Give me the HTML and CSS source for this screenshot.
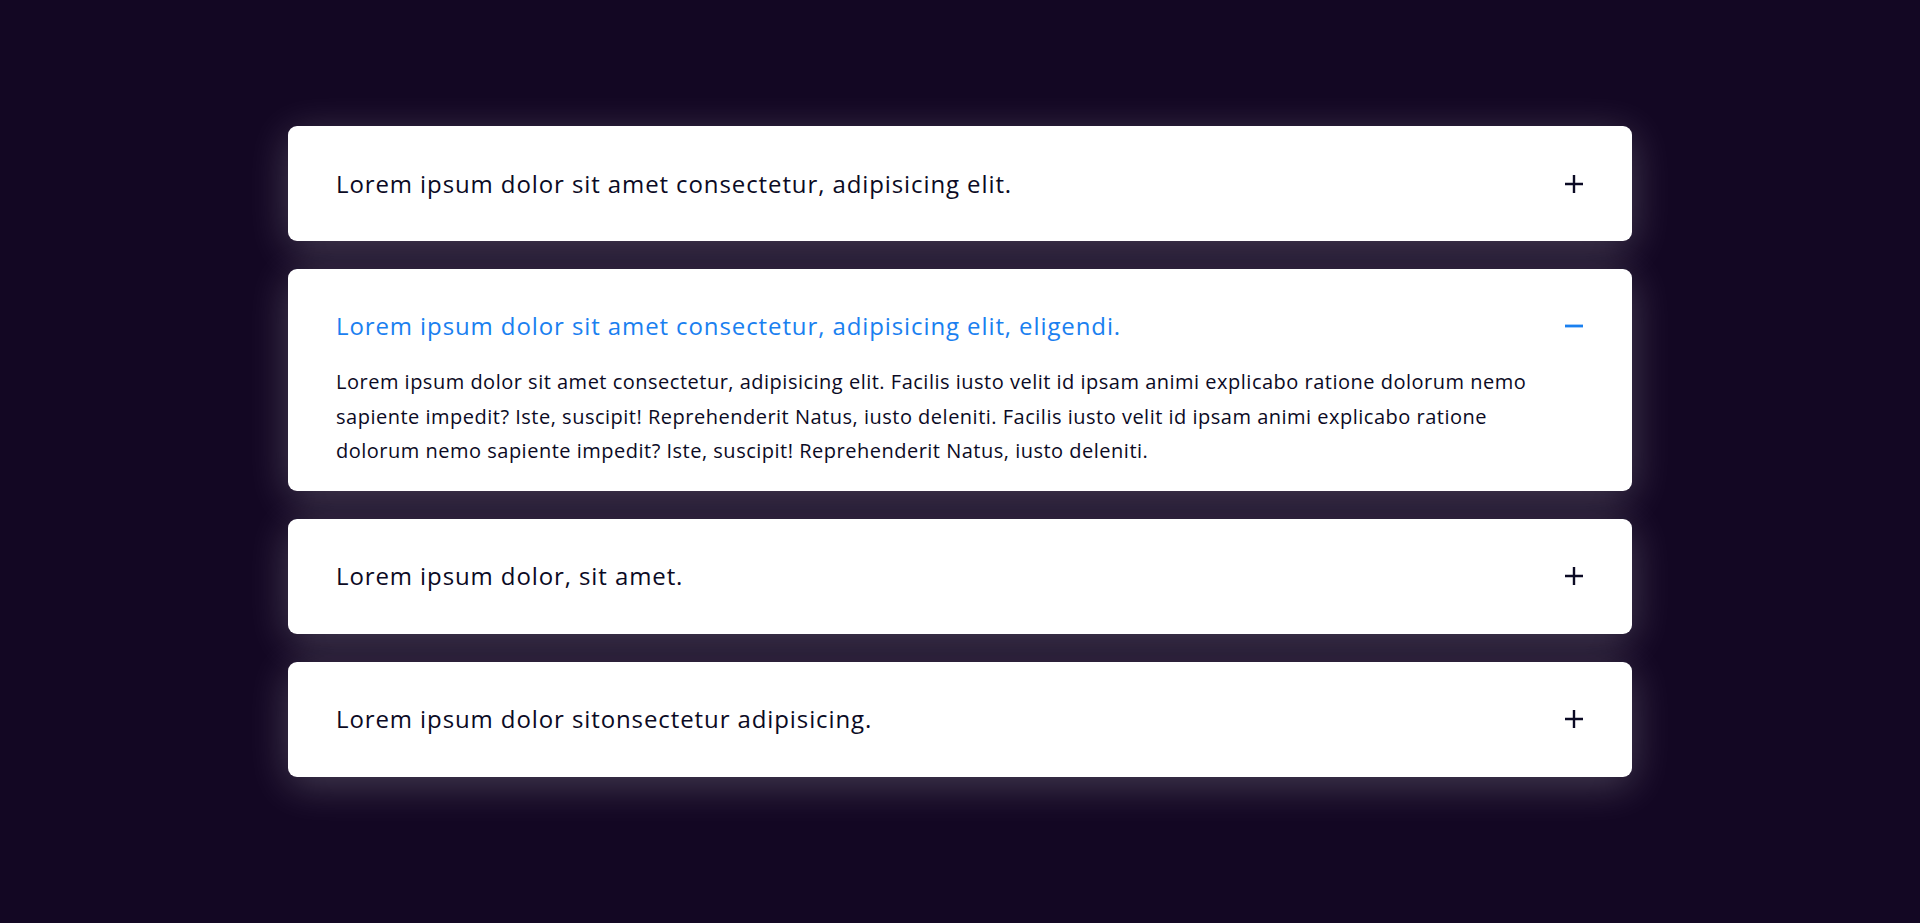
FILE: index.html
```html
<!DOCTYPE html>
<html lang="en">
<head>
<meta charset="utf-8">
<title>FAQ Accordion</title>
<link rel="stylesheet" href="styles.css">
</head>
<body>
<main class="faq">
  <section class="item">
    <div class="head">
      <h3 class="title">Lorem ipsum dolor sit amet consectetur, adipisicing elit.</h3>
      <svg class="icon" viewBox="0 0 20 20"><path d="M10 1v18M1 10h18"/></svg>
    </div>
  </section>
  <section class="item open">
    <div class="head">
      <h3 class="title">Lorem ipsum dolor sit amet consectetur, adipisicing elit, eligendi.</h3>
      <svg class="icon" viewBox="0 0 20 20"><path d="M1 10h18"/></svg>
    </div>
    <p class="body">Lorem ipsum dolor sit amet consectetur, adipisicing elit. Facilis iusto velit id ipsam animi explicabo ratione dolorum nemo sapiente impedit? Iste, suscipit! Reprehenderit Natus, iusto deleniti. Facilis iusto velit id ipsam animi explicabo ratione dolorum nemo sapiente impedit? Iste, suscipit! Reprehenderit Natus, iusto deleniti.</p>
  </section>
  <section class="item">
    <div class="head">
      <h3 class="title">Lorem ipsum dolor, sit amet.</h3>
      <svg class="icon" viewBox="0 0 20 20"><path d="M10 1v18M1 10h18"/></svg>
    </div>
  </section>
  <section class="item">
    <div class="head">
      <h3 class="title">Lorem ipsum dolor sitonsectetur adipisicing.</h3>
      <svg class="icon" viewBox="0 0 20 20"><path d="M10 1v18M1 10h18"/></svg>
    </div>
  </section>
</main>
</body>
</html>
```
FILE: styles.css
```css
html, body {
  margin: 0;
  padding: 0;
  background: #130723;
  height: 100%;
}
body {
  font-family: "Open Sans", "Noto Sans", sans-serif;
  color: #0b0a24;
}
.faq {
  width: 1344px;
  margin: 0 auto;
  padding-top: 126px;
  display: flex;
  flex-direction: column;
  gap: 28px;
}
.item {
  background: #fff;
  border-radius: 9px;
  box-shadow: 0 8px 42px rgba(255, 255, 255, 0.22);
  padding: 0 48px;
}
.head {
  height: 115px;
  display: flex;
  align-items: center;
  justify-content: space-between;
}
.title {
  margin: 0;
  font-size: 24px;
  line-height: 36px;
  letter-spacing: 0.9px;
  font-weight: 500;
  color: #0b0a24;
}
.icon {
  width: 20px;
  height: 20px;
  flex: none;
  fill: none;
  stroke: #0b0a24;
  stroke-width: 2.4;
}
.open .title { color: #1a80f0; }
.open .icon { stroke: #1a80f0; stroke-width: 2.8; }
.open .head {
  height: auto;
  padding: 39px 0 21px;
}
.body {
  margin: 0;
  padding: 0 16px 22px 0;
  font-size: 20px;
  line-height: 34.5px;
  letter-spacing: 0.5px;
  color: #0b0a24;
}
```
